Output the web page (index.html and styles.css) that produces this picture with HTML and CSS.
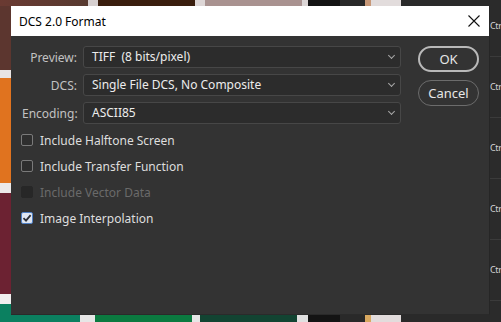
FILE: index.html
```html
<!DOCTYPE html>
<html lang="en">
<head>
    <meta charset="UTF-8">
    <title>DCS 2.0 Format</title>
    <link rel="stylesheet" href="styles.css">
</head>
<body>
    <div class="desk">
        <div class="strip-top"></div>
        <div class="strip-left"></div>
        <div class="strip-bottom"></div>
        <div class="side">
            <div class="side-row">Ctr</div>
            <div class="side-row">Ctr</div>
            <div class="side-row">Ctr</div>
            <div class="side-row">Ctr</div>
            <div class="side-row">Ctr</div>
            <div class="side-row"></div>
        </div>

        <div class="dialog">
            <div class="titlebar">
                <span class="title">DCS 2.0 Format</span>
                <svg class="close" width="12" height="12" viewBox="0 0 12 12">
                    <path d="M0.5 0.5 L11.5 11.5 M11.5 0.5 L0.5 11.5" stroke="#111" stroke-width="1.1" fill="none"/>
                </svg>
            </div>
            <div class="body">
                <div class="main">
                    <div class="fields">
                        <label class="label">Preview:</label>
                        <div class="select">TIFF&nbsp; (8 bits/pixel)<span class="chev"></span></div>
                        <label class="label">DCS:</label>
                        <div class="select">Single File DCS, No Composite<span class="chev"></span></div>
                        <label class="label">Encoding:</label>
                        <div class="select">ASCII85<span class="chev"></span></div>
                    </div>
                    <div class="checks">
                        <div class="check"><span class="box"></span>Include Halftone Screen</div>
                        <div class="check"><span class="box"></span>Include Transfer Function</div>
                        <div class="check disabled"><span class="box"></span>Include Vector Data</div>
                        <div class="check checked">
                            <span class="box">
                                <svg width="10" height="10" viewBox="0 0 10 10">
                                    <path d="M1.5 5.2 L4 7.6 L8.6 2.2" stroke="#2b2e36" stroke-width="1.8" fill="none"/>
                                </svg>
                            </span>Image Interpolation
                        </div>
                    </div>
                </div>
                <div class="buttons">
                    <button class="btn primary">OK</button>
                    <button class="btn">Cancel</button>
                </div>
            </div>
        </div>
    </div>
</body>
</html>
```
FILE: styles.css
```css
* {
    box-sizing: border-box;
}

body {
    margin: 0;
    font-family: "Noto Sans", "Open Sans", sans-serif;
    font-size: 12px;
    background: #2a2a2a;
}

.desk {
    display: grid;
    grid-template-columns: 11px 479px 11px;
    grid-template-rows: 6px 309px 7px;
    width: 501px;
    height: 322px;
    overflow: hidden;
}

.strip-top {
    grid-column: 1 / 3;
    grid-row: 1;
    background: linear-gradient(to right,
        #6a3a32 0, #573a30 88px, #d6cfcf 88px, #d6cfcf 98px,
        #3a1e0e 98px, #3a1e0e 195px, #ddd6d6 195px, #ddd6d6 205px,
        #a99290 205px, #a99290 302px, #dcd6d6 302px, #dcd6d6 308px,
        #141414 308px, #141414 340px, #292929 340px, #292929 365px,
        #c79878 365px, #c79878 371px, #e2dcdc 371px, #e2dcdc 401px,
        #2a2a2a 401px);
}

.strip-left {
    grid-column: 1;
    grid-row: 2;
    background: linear-gradient(to bottom,
        #5c362f 0, #5c362f 64px, #e8e4e4 64px, #e8e4e4 72px,
        #e0731f 72px, #e0731f 177px, #ece8e8 177px, #ece8e8 187px,
        #6c2232 187px, #6c2232 288px, #f0eeee 288px, #f0eeee 298px,
        #0b8060 298px);
}

.strip-bottom {
    grid-column: 1 / 3;
    grid-row: 3;
    background: linear-gradient(to right,
        #0b8060 0, #0b8060 80px, #e6e6e6 80px, #e6e6e6 95px,
        #0b7a40 95px, #0b7a40 192px, #e6e6e6 192px, #e6e6e6 200px,
        #124432 200px, #124432 297px, #e0e0e0 297px, #e0e0e0 308px,
        #141414 308px, #141414 340px, #292929 340px, #292929 365px,
        #d8a860 365px, #d8a860 371px, #e2dcdc 371px, #e2dcdc 401px,
        #2a2a2a 401px);
}

.side {
    grid-column: 3;
    grid-row: 1 / 4;
    background: #2b2b2b;
    margin-top: -4px;
    overflow: hidden;
}

.side-row {
    height: 61px;
    line-height: 60px;
    border-bottom: 1px solid #3b3b3b;
    color: #d4d4d4;
    font-size: 9px;
    letter-spacing: -0.4px;
    white-space: nowrap;
}

.dialog {
    grid-column: 2;
    grid-row: 2;
    display: flex;
    flex-direction: column;
    background: #333333;
    border-right: 1px solid #262626;
    border-bottom: 1px solid #2a2a2a;
}

.titlebar {
    height: 30px;
    flex-shrink: 0;
    display: flex;
    align-items: center;
    justify-content: space-between;
    padding: 0 9px 0 8px;
    background: #ffffff;
    color: #000;
}

.title {
    font-size: 12px;
}

.body {
    display: grid;
    grid-template-columns: 1fr 61px;
    column-gap: 17px;
    padding: 10px 10px 0 11px;
}

.fields {
    display: grid;
    grid-template-columns: 55px 1fr;
    column-gap: 6px;
    row-gap: 6px;
    align-items: center;
}

.label {
    text-align: right;
    color: #c2c2c2;
}

.select {
    position: relative;
    height: 22px;
    line-height: 20px;
    padding-left: 8px;
    background: #2c2c2c;
    border: 1px solid #474747;
    border-radius: 3px;
    color: #ececec;
}

.chev {
    position: absolute;
    right: 6px;
    top: 6px;
    width: 5px;
    height: 5px;
    border-right: 1px solid #a8a8a8;
    border-bottom: 1px solid #a8a8a8;
    transform: rotate(45deg);
}

.checks {
    margin: 3px 0 0 -1px;
}

.check {
    display: flex;
    align-items: center;
    height: 26px;
    color: #dedede;
}

.box {
    display: flex;
    align-items: center;
    justify-content: center;
    width: 12px;
    height: 12px;
    margin-right: 7px;
    border: 1px solid #7a7a7a;
    border-radius: 2px;
    background: #2e2e2e;
}

.check.disabled {
    color: #6a6a6a;
}

.check.disabled .box {
    border-color: #272727;
    background: #272727;
}

.check.checked .box {
    border-color: #4f7fc4;
    background: #dfe6f2;
}

.buttons {
    display: flex;
    flex-direction: column;
    gap: 8px;
}

.btn {
    height: 26px;
    border: 1px solid #6c6c6c;
    border-radius: 13px;
    background: #333333;
    color: #e6e6e6;
    font-family: inherit;
    font-size: 13px;
    padding: 0;
}

.btn.primary {
    border: 2px solid #b9b9b9;
}
```
